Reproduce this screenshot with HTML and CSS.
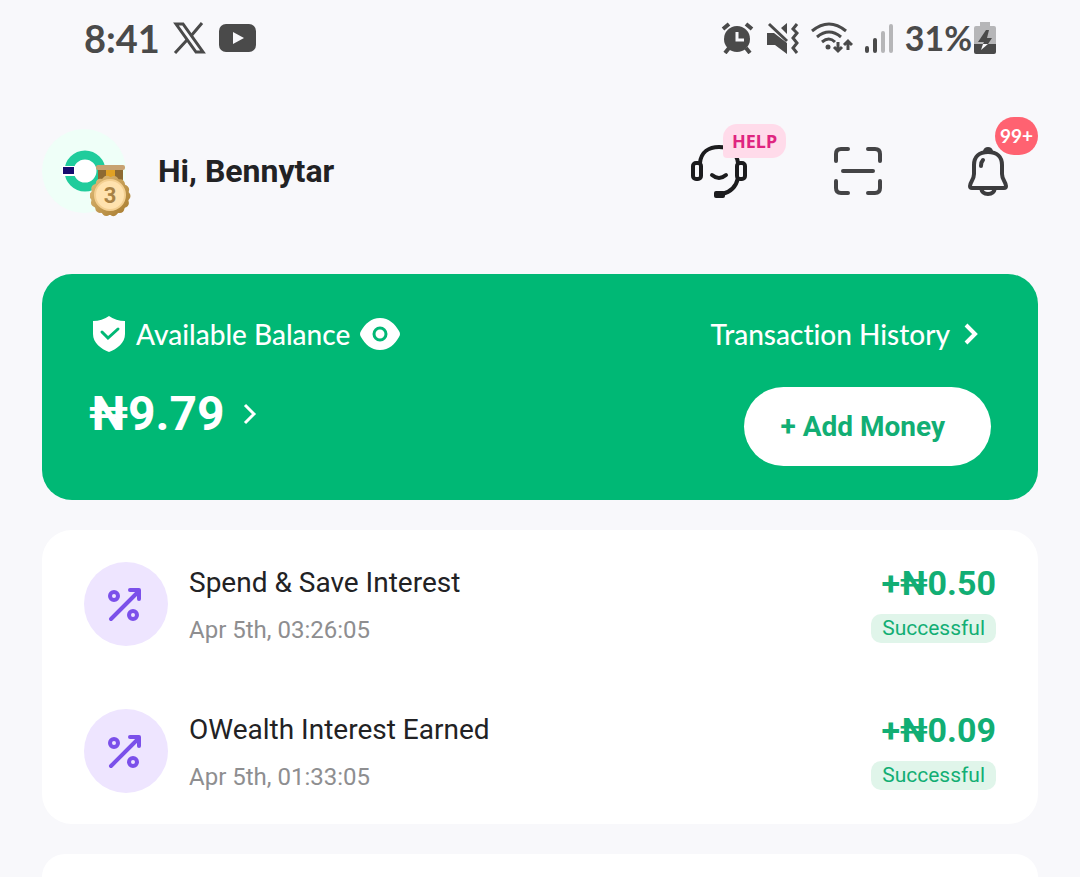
FILE: index.html
```
<!DOCTYPE html>
<html lang="en">
  <head>
    <meta charset="UTF-8" />
    <meta name="viewport" content="width=device-width, initial-scale=1.0" />
    <title>Wallet</title>
    <link rel="stylesheet" href="styles.css">
  </head>
  <body>
    <!-- Status bar -->
    <div class="status">
      <div class="status__side">
        <span class="status__text">8:41</span>
        <svg class="status__x" width="33" height="32" viewBox="0 0 33 32">
          <path d="M3 2h7l20 28h-7z" fill="none" stroke="#4a4a4a" stroke-width="3" />
          <path d="M29 1L18 14M14 18L2 31" stroke="#4a4a4a" stroke-width="3" />
        </svg>
        <svg width="37" height="28" viewBox="0 0 37 28">
          <rect width="37" height="28" rx="7" fill="#4a4a4a" />
          <path d="M14 8v12l11-6z" fill="#f8f8fb" />
        </svg>
      </div>
      <div class="status__side status__side--right">
        <svg width="33" height="32" viewBox="0 0 33 32">
          <path d="M2 7l6-5M31 7l-6-5" stroke="#4a4a4a" stroke-width="4" />
          <path d="M8 26l-4 5M25 26l4 5" stroke="#4a4a4a" stroke-width="4" />
          <circle cx="16" cy="17" r="13" fill="#4a4a4a" />
          <path d="M16 10v8h7" fill="none" stroke="#f8f8fb" stroke-width="3" />
        </svg>
        <svg width="33" height="32" viewBox="0 0 33 32">
          <path d="M1 11h7l13 10v11L9 23H1zM21 1v11l-6-6z" fill="#4a4a4a" />
          <path d="M3 2l18 17" stroke="#4a4a4a" stroke-width="3" />
          <path d="M31 2l-4 5 4 4-4 5 4 5-4 5 4 5" fill="none" stroke="#4a4a4a" stroke-width="3" />
        </svg>
        <svg width="42" height="32" viewBox="0 0 42 32">
          <g fill="none" stroke="#4a4a4a" stroke-width="3">
            <path d="M1 9q17-14 34 0M6 15q12-10 24 0M11 20q7-6 13 0" />
            <path d="M27 20v9M23 25l4 4 4-4M37 28v-9M33 23l4-4 4 4" />
          </g>
          <circle cx="17" cy="25" r="2.5" fill="#4a4a4a" />
        </svg>
        <svg width="28" height="32" viewBox="0 0 28 32">
          <g stroke-width="4" stroke-linecap="round">
            <path d="M2 26v3M10 18v11" stroke="#4a4a4a" />
            <path d="M18 11v18M26 4v25" stroke="#b6b6b8" />
          </g>
        </svg>
        <span class="status__text status__text--battery">31%</span>
        <svg width="22" height="32" viewBox="0 0 22 32">
          <path d="M6 0h10v4h4q2 0 2 2v16H0V6q0-2 2-2h4z" fill="#b6b6b8" />
          <path d="M0 22h22v8q0 2-2 2H2q-2 0-2-2z" fill="#4a4a4a" />
          <path d="M12 8L4 20h6l-1 2h5l4-6h-5l2-8z" fill="#4a4a4a" />
          <path d="M9 22l-2 6 7-6z" fill="#f8f8fb" />
        </svg>
      </div>
    </div>

    <header class="header">
      <a class="profile" href="#profile">
        <span class="avatar">
          <svg width="84" height="84" viewBox="0 0 84 84">
            <circle cx="42" cy="42" r="42" fill="#effff8" />
            <circle cx="43" cy="42" r="16" fill="#fff" stroke="#20cc9c" stroke-width="9" />
            <path d="M20 37h14v10H20z" fill="#fff" />
            <path d="M21 38h11v7H21z" fill="#160c6e" />
          </svg>
          <svg class="avatar__medal" width="42" height="52" viewBox="0 0 42 52">
            <defs>
              <linearGradient id="gold" x1="0" y1="0" x2="1" y2="1">
                <stop offset="0" stop-color="#dcb874" />
                <stop offset="1" stop-color="#ac8034" />
              </linearGradient>
            </defs>
            <path d="M8 4h25v11H8z" fill="#8d6a32" />
            <path d="M16 4h9v11h-9z" fill="#e0a224" />
            <rect x="6" width="29" height="5" rx="2" fill="#c8a272" />
            <circle cx="20" cy="31" r="19" fill="url(#gold)" />
            <circle cx="20" cy="31" r="16" fill="none" stroke="url(#gold)" stroke-width="9" stroke-linecap="round" stroke-dasharray="0 7.18" />
            <circle cx="20" cy="30" r="15" fill="#ffe2ae" stroke="#f3cf91" stroke-width="2" />
            <text class="avatar__level" x="20" y="38" text-anchor="middle">3</text>
          </svg>
        </span>
        <span class="profile__name">Hi, Bennytar</span>
      </a>
      <div class="actions">
        <button class="action" aria-label="Customer support">
          <svg width="58" height="54" viewBox="0 0 58 54">
            <g fill="none" stroke="#1c1c1e" stroke-width="4">
              <rect x="3" y="19" width="8" height="16" rx="3" />
              <rect x="47" y="19" width="8" height="16" rx="3" />
              <path d="M10 19C11 8 19 3 29 3s18 6 19 16M48 34c-2 9-7 14-16 16" />
              <path d="M22 31q7 6 14 0" stroke-linecap="round" />
            </g>
            <rect x="24" y="47" width="11" height="7" rx="2" fill="#1c1c1e" />
          </svg>
          <span class="badge badge--help">HELP</span>
        </button>
        <button class="action" aria-label="Scan">
          <svg width="48" height="48" viewBox="0 0 48 48">
            <path d="M14 2H7Q2 2 2 7v7M34 2h7q5 0 5 5v7M46 34v7q0 5-5 5h-7M14 46H7q-5 0-5-5v-7M9 24h30" fill="none" stroke="#444446" stroke-width="4" stroke-linecap="round" />
          </svg>
        </button>
        <button class="action" aria-label="Notifications">
          <svg width="40" height="50" viewBox="0 0 40 50">
            <g fill="none" stroke="#3c3c3e" stroke-width="4" stroke-linejoin="round">
              <path d="M20 6C11 6 6 11 6 19v9c0 6-4 8-4 12q0 2 2 2h32q2 0 2-2c0-4-4-6-4-12v-9C34 11 29 6 20 6z" />
              <path d="M13 42q1 6 7 6t7-6" />
              <path d="M15 14q-2 2-2 6" stroke-linecap="round" />
            </g>
            <path d="M15 5q1-4 5-4t5 4z" fill="#3c3c3e" />
          </svg>
          <span class="badge badge--count">99+</span>
        </button>
      </div>
    </header>

    <main class="main">
      <section class="balance">
        <div class="balance__label">
          <svg width="34" height="38" viewBox="0 0 34 38">
            <path d="M17 1q7 5 16 5v13c0 9-8 15-16 18C9 34 1 28 1 19V6q9 0 16-5z" fill="#fff" />
            <path d="M10 17l6 6 10-9" fill="none" stroke="#00b875" stroke-width="3" stroke-linecap="round" />
          </svg>
          <span>Available Balance</span>
          <button class="balance__eye" aria-label="Hide balance">
            <svg width="40" height="32" viewBox="0 0 40 32">
              <path d="M20 0c9 0 15 6 19 13q2 3 0 6c-4 7-10 13-19 13S5 26 1 19q-2-3 0-6C5 6 11 0 20 0z" fill="#fff" />
              <circle cx="20" cy="16" r="6" fill="none" stroke="#00b875" stroke-width="3" />
            </svg>
          </button>
        </div>
        <a class="balance__history" href="#history">
          <span>Transaction History</span>
          <svg width="14" height="22" viewBox="0 0 14 22">
            <path d="M2 2l9 9-9 9" fill="none" stroke="#fff" stroke-width="4" />
          </svg>
        </a>
        <a class="balance__amount" href="#balance">
          <span>₦9.79</span>
          <svg width="14" height="22" viewBox="0 0 14 22">
            <path d="M2 2l9 9-9 9" fill="none" stroke="#fff" stroke-width="3" />
          </svg>
        </a>
        <button class="balance__add">+ Add Money</button>
      </section>

      <ul class="list">
        <li class="item">
          <svg class="item__icon" width="84" height="84" viewBox="0 0 84 84">
            <circle cx="42" cy="42" r="42" fill="#eee5ff" />
            <g fill="none" stroke="#7b50ea" stroke-width="4" stroke-linecap="round" stroke-linejoin="round">
              <circle cx="30" cy="34" r="4" />
              <circle cx="49" cy="53" r="4" />
              <path d="M27 57l28-28M46 28h9v9" />
            </g>
          </svg>
          <div class="item__info">
            <span class="item__title">Spend &amp; Save Interest</span>
            <span class="item__date">Apr 5th, 03:26:05</span>
          </div>
          <div class="item__sum">
            <span class="item__amount">+₦0.50</span>
            <span class="item__state">Successful</span>
          </div>
        </li>
        <li class="item">
          <svg class="item__icon" width="84" height="84" viewBox="0 0 84 84">
            <circle cx="42" cy="42" r="42" fill="#eee5ff" />
            <g fill="none" stroke="#7b50ea" stroke-width="4" stroke-linecap="round" stroke-linejoin="round">
              <circle cx="30" cy="34" r="4" />
              <circle cx="49" cy="53" r="4" />
              <path d="M27 57l28-28M46 28h9v9" />
            </g>
          </svg>
          <div class="item__info">
            <span class="item__title">OWealth Interest Earned</span>
            <span class="item__date">Apr 5th, 01:33:05</span>
          </div>
          <div class="item__sum">
            <span class="item__amount">+₦0.09</span>
            <span class="item__state">Successful</span>
          </div>
        </li>
      </ul>

      <section class="next"></section>
    </main>
  </body>
</html>
```
FILE: styles.css
```
:root {
  --main-font: Roboto, "Liberation Sans", sans-serif;
  --hand-font: Lato, "Open Sans", sans-serif;
  --page: #f8f8fb;
  --green: #00b875;
  --green-text: #12ae74;
  --text: #222224;
}
*,
*::after,
*::before {
  box-sizing: border-box;
  margin: 0;
}
body {
  display: flex;
  flex-direction: column;
  min-height: 100vh;
  background: var(--page);
  color: var(--text);
  font-family: var(--main-font);
}
a {
  color: inherit;
  text-decoration: none;
}
button {
  padding: 0;
  border: none;
  background: none;
  font-family: inherit;
  cursor: pointer;
}
svg {
  display: block;
  flex-shrink: 0;
}

/* Status bar */
.status {
  display: flex;
  justify-content: space-between;
  align-items: center;
  height: 76px;
  padding: 0 84px;
  color: #4a4a4a;
}
.status__side {
  display: flex;
  align-items: center;
  gap: 13px;
}
.status__side--right {
  gap: 12px;
}
.status__text {
  font-family: var(--hand-font);
  font-size: 38px;
  font-weight: bold;
  line-height: 40px;
}
.status__text--battery {
  font-size: 34px;
  margin-right: -10px;
}

/* Header */
.header {
  display: flex;
  justify-content: space-between;
  align-items: center;
  padding: 53px 72px 61px 42px;
}
.profile {
  display: flex;
  align-items: center;
  gap: 32px;
}
.profile__name {
  font-size: 32px;
  font-weight: bold;
}
.avatar {
  position: relative;
}
.avatar__medal {
  position: absolute;
  left: 48px;
  top: 36px;
}
.avatar__level {
  fill: #a98245;
  font-size: 22px;
  font-weight: bold;
}
.actions {
  display: flex;
  align-items: center;
  gap: 86px;
}
.action {
  position: relative;
}
.badge {
  position: absolute;
  font-weight: bold;
}
.badge--help {
  left: 33px;
  top: -20px;
  padding: 0 9px;
  border-radius: 14px 14px 14px 4px;
  background: #ffdbea;
  color: #df2580;
  font-family: "Noto Sans", sans-serif;
  font-size: 18px;
  line-height: 34px;
}
.badge--count {
  left: 27px;
  top: -29px;
  padding: 0 5px;
  border-radius: 19px;
  background: #ff6271;
  color: #fff;
  font-family: var(--hand-font);
  font-size: 19px;
  line-height: 38px;
}

.main {
  display: flex;
  flex-direction: column;
  flex-grow: 1;
  gap: 30px;
  padding: 0 42px;
}

/* Balance card */
.balance {
  display: grid;
  grid-template-columns: 1fr auto;
  row-gap: 33px;
  padding: 40px 47px 34px;
  border-radius: 30px;
  background: var(--green);
  color: #fff;
}
.balance__label,
.balance__history {
  display: flex;
  align-items: center;
  height: 40px;
  font-family: var(--hand-font);
  font-size: 28px;
  font-weight: 500;
  font-variant-ligatures: none;
}
.balance__label {
  gap: 10px;
  padding-left: 3px;
}
.balance__history {
  justify-content: flex-end;
  gap: 14px;
  padding-right: 13px;
}
.balance__amount {
  display: flex;
  align-items: center;
  align-self: start;
  gap: 18px;
  font-size: 48px;
  font-weight: bold;
  line-height: 54px;
}
.balance__add {
  justify-self: end;
  padding: 0 46px 0 36px;
  border-radius: 40px;
  background: #fff;
  color: var(--green-text);
  font-size: 28px;
  font-weight: bold;
  line-height: 79px;
}

/* Transactions */
.list {
  display: flex;
  flex-direction: column;
  gap: 63px;
  padding: 32px 42px 31px;
  border-radius: 30px;
  background: #fff;
  list-style: none;
}
.item {
  display: flex;
  gap: 21px;
}
.item__info,
.item__sum {
  display: flex;
  flex-direction: column;
  gap: 10px;
}
.item__info {
  flex-grow: 1;
}
.item__sum {
  align-items: flex-end;
}
.item__title {
  font-size: 28px;
  line-height: 42px;
}
.item__date {
  color: #8e8e90;
  font-size: 24px;
  line-height: 32px;
}
.item__amount {
  color: var(--green-text);
  font-size: 34px;
  font-weight: bold;
  line-height: 42px;
}
.item__state {
  padding: 0 11px;
  border-radius: 10px;
  background: #e0f5ea;
  color: var(--green-text);
  font-size: 21px;
  line-height: 29px;
}

.next {
  flex-grow: 1;
  border-radius: 30px 30px 0 0;
  background: #fff;
}
```
